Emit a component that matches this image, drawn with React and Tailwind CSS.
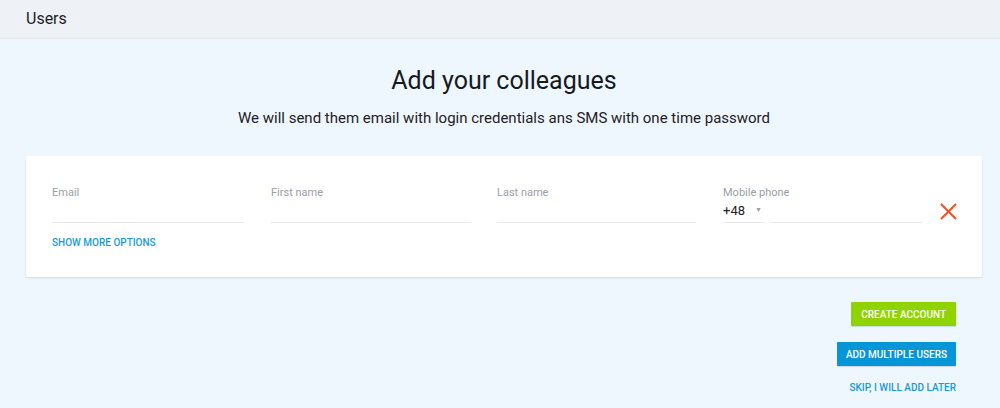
const Field = ({ label, className }) => (
  <div className={className}>
    <label className="block text-[11px] leading-[13px] text-[#9aa0a6]">{label}</label>
    <div className="h-[24px] border-b border-[#e8eaed]" />
  </div>
);

const App = () => {
  return (
    <div className="min-h-[408px] bg-[#eff7fe] font-['Roboto',sans-serif] text-[#1f2328]">
      {/* Header */}
      <div className="h-[39px] bg-[#eef1f5] border-b border-[#e2e6eb] flex items-center px-[26px]">
        <h1 className="text-[16px] text-[#1d2125]">Users</h1>
      </div>

      <div className="pl-[26px] pr-[18px]">
        <h2 className="text-center text-[25px] leading-[32px] mt-[26px] text-[#161a1e]">Add your colleagues</h2>
        <p className="text-center text-[15px] leading-[20px] mt-[11px] text-[#1d2125]">
          We will send them email with login credentials ans SMS with one time password
        </p>

        {/* Card */}
        <div className="mt-[28px] bg-white rounded-[2px] shadow-[0_1px_2px_rgba(0,0,0,0.12)] px-[26px] pt-[30px] pb-[24px]">
          <div className="flex items-start">
            <Field label="Email" className="w-[192px] shrink-0" />
            <Field label="First name" className="w-[200px] ml-[27px] shrink-0" />
            <Field label="Last name" className="w-[199px] ml-[26px] shrink-0" />
            <div className="w-[199px] ml-[27px] shrink-0">
              <label className="block text-[11px] leading-[13px] text-[#9aa0a6]">Mobile phone</label>
              <div className="flex gap-[5px]">
                <div className="w-[42px] h-[24px] border-b border-[#e8eaed] flex items-center justify-between">
                  <span className="text-[13px] text-[#1d2125]">+48</span>
                  <span className="text-[7px] text-[#9aa0a6] mr-[3px]">▼</span>
                </div>
                <div className="flex-1 h-[24px] border-b border-[#e8eaed]" />
              </div>
            </div>
            <button className="ml-[18px] mt-[17px] shrink-0">
              <svg width="17" height="17" viewBox="0 0 17 17" fill="none" stroke="#f4511e" strokeWidth="2">
                <path d="M1 1 L16 16 M16 1 L1 16" />
              </svg>
            </button>
          </div>
          <button className="mt-[14px] text-[10px] leading-[12px] font-medium text-[#1b9ad8]">
            SHOW MORE OPTIONS
          </button>
        </div>

        {/* Actions */}
        <div className="flex flex-col items-end pr-[26px] mt-[25px]">
          <button className="h-[24px] px-[10px] bg-[#8fd400] text-white text-[10px] font-medium rounded-[1px] shadow-[0_1px_1px_rgba(0,0,0,0.15)]">
            CREATE ACCOUNT
          </button>
          <button className="mt-[16px] h-[24px] px-[9px] bg-[#0795da] text-white text-[10px] font-medium rounded-[1px] shadow-[0_1px_1px_rgba(0,0,0,0.15)]">
            ADD MULTIPLE USERS
          </button>
          <button className="mt-[14px] text-[10px] font-medium text-[#1b9ad8]">
            SKIP, I WILL ADD LATER
          </button>
        </div>
      </div>
    </div>
  );
};

export default App;
